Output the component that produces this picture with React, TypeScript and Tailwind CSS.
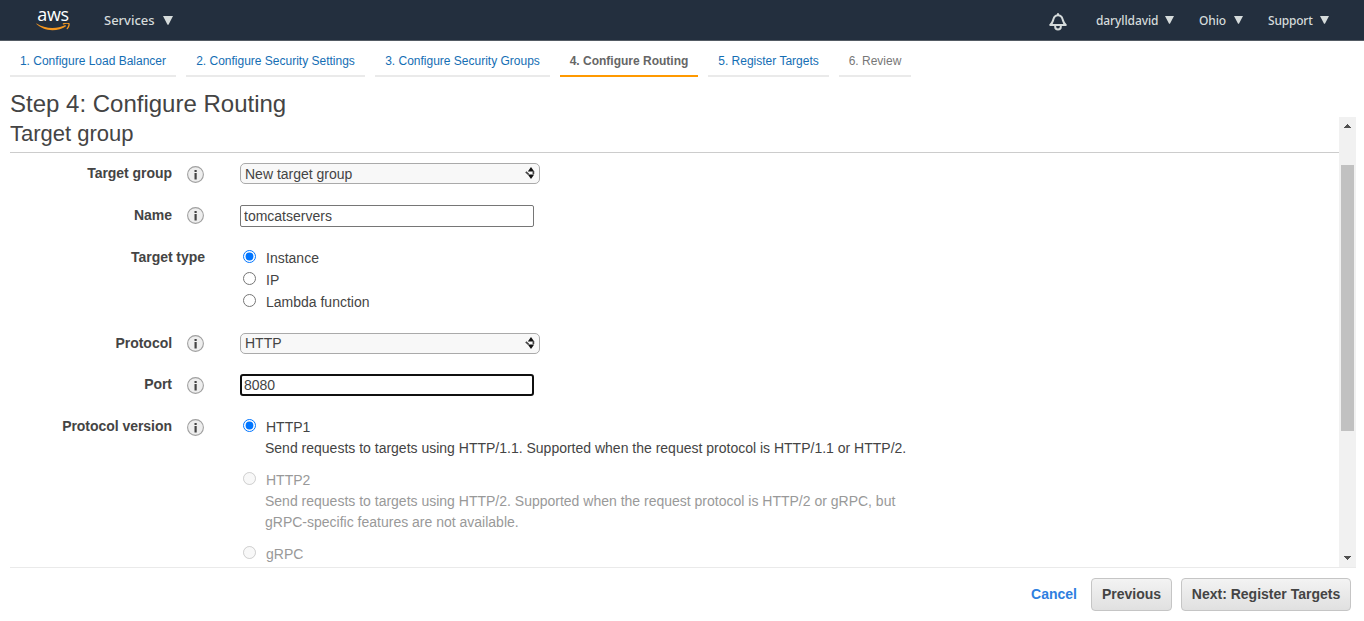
import React from "react";

function Caret({ size }: { size: "lg" | "sm" }) {
  return (
    <svg className={size === "lg" ? "h-[9px] w-[10px]" : "h-[8px] w-[9px]"} viewBox="0 0 11 9" preserveAspectRatio="none">
      <path d="M0 0h11L6.2 8.4a.8.8 0 0 1-1.4 0z" fill="#d5dbdb" />
    </svg>
  );
}

function AwsLogo() {
  return (
    <div className="flex h-[22px] w-[34px] flex-col items-center">
      <span className="h-[13px] font-['Open_Sans',sans-serif] text-[18px] leading-[9px] font-medium tracking-[-0.4px] text-white">aws</span>
      <svg className="h-[8px] w-[34px]" viewBox="0 0 34 8">
        <path d="M0.600 0.500C5 3.600 10.600 4.900 16.400 4.900c4.800 0 9-1 13-2.900l.6 1.200C26.200 5.900 21.400 7.200 16.400 7.200 10 7.200 4.400 4.900.4 1.100c-.3-.4-.1-.7.2-.6z" fill="#f7981f" />
        <path d="M27.400 0.900c2-1 5-.9 5.500-.3.500.7-.1 3.400-1.700 5" fill="none" stroke="#f7981f" strokeWidth="1.300" strokeLinecap="round" />
      </svg>
    </div>
  );
}

function Bell() {
  return (
    <svg className="h-[18px] w-[18px]" viewBox="0 0 18 18" fill="none" stroke="#d5dbdb" strokeWidth="2" strokeLinejoin="round" strokeLinecap="round">
      <path d="M9 1v1M1.200 12h15.600c-2.400-1.900-2.400-3.200-3.200-5.800C12.900 3.900 11.400 2.300 9 2.300S5.100 3.900 4.400 6.200C3.600 8.800 3.600 10.100 1.200 12z" />
      <path d="M6.200 12.600v1.200a2.800 2.800 0 0 0 5.600 0v-1.200" />
    </svg>
  );
}

function Header() {
  return (
    <header className="flex h-[41px] shrink-0 items-start border-b border-[#545b64] bg-[#232f3e] font-['Noto_Sans',sans-serif] text-[#d5dbdb]">
      <div className="pt-[10px] pl-[36px]">
        <AwsLogo />
      </div>
      <button className="ml-[34px] flex h-10 w-[69px] items-center justify-between">
        <span className="text-[13px] font-medium whitespace-nowrap">Services</span>
        <Caret size="lg" />
      </button>
      <div className="ml-auto flex h-10 items-center text-[12px] font-medium">
        <div className="mt-[3px] mr-[29px]">
          <Bell />
        </div>
        <button className="mr-[25px] flex w-[78px] items-center justify-between">
          <span className="tracking-[-0.1px]">darylldavid</span>
          <Caret size="sm" />
        </button>
        <button className="mr-[25px] flex w-[44px] items-center justify-between">
          <span className="tracking-[-0.1px]">Ohio</span>
          <Caret size="sm" />
        </button>
        <button className="mr-[35px] flex w-[61px] items-center justify-between">
          <span className="tracking-[-0.2px]">Support</span>
          <Caret size="sm" />
        </button>
      </div>
    </header>
  );
}

const steps = [
  { label: "1. Configure Load Balancer", style: "w-[166px] border-[#eaeaea] text-[#146eb4]" },
  { label: "2. Configure Security Settings", style: "w-[179px] border-[#eaeaea] text-[#146eb4]" },
  { label: "3. Configure Security Groups", style: "w-[175px] border-[#eaeaea] text-[#146eb4]" },
  { label: "4. Configure Routing", style: "w-[138px] border-[#f90] text-[#666] font-bold" },
  { label: "5. Register Targets", style: "w-[121px] border-[#eaeaea] text-[#146eb4]" },
  { label: "6. Review", style: "w-[72px] border-[#eaeaea] text-[#777]" },
];

function Info({ className }: { className: string }) {
  return (
    <svg className={"ml-[15px] h-[17px] w-[17px] shrink-0 " + className} viewBox="0 0 17 17">
      <circle cx="8.5" cy="8.500" r="7.900" fill="#eee" stroke="#a0a0a0" strokeWidth="1.100" />
      <path d="M7.500 4h2.200v2H7.500zM7.500 7h2.200v6.500H7.500z" fill="#444" />
    </svg>
  );
}

function Row({ label, height, info, children }: { label: string; height: string; info?: string; children: React.ReactNode }) {
  return (
    <div className={"flex shrink-0 items-start " + height}>
      <div className="flex w-[230px] shrink-0">
        <div className={"text-right font-bold tracking-[-0.04px] whitespace-nowrap " + (info ? "w-[162px]" : "w-[195px]")}>{label}</div>
        {info && <Info className={info} />}
      </div>
      <div>{children}</div>
    </div>
  );
}

function Select({ value, textStyle = "" }: { value: string; textStyle?: string }) {
  return (
    <div className="flex h-[21px] w-[300px] items-center justify-between rounded-[5px] border border-[#aaa] bg-[#f8f8f8] pr-[4px] pl-[4px]">
      <span className={textStyle}>{value}</span>
      <svg className="mb-px h-[12px] w-[10px]" viewBox="0 0 10 12">
        <path d="M6 0l3.200 4.500H2.800zM6 12l3.200-4.500H2.800z" fill="#111" />
        <path d="M0.800 4.800l2.800 2.600M8.400 4v3" fill="none" stroke="#444" strokeWidth="1.700" />
      </svg>
    </div>
  );
}

function Radio({ label, group, checked, disabled }: { label: string; group: string; checked?: boolean; disabled?: boolean }) {
  return (
    <label className="flex items-start">
      <input type="radio" name={group} defaultChecked={checked} disabled={disabled} className="mt-[2px] mr-[10px] ml-[3px] h-[13px] w-[13px] shrink-0" />
      <span>{label}</span>
    </label>
  );
}

export default function App() {
  return (
    <div className="flex h-[621px] w-[1364px] flex-col overflow-hidden bg-white font-['Liberation_Sans',Arial,sans-serif] text-[14px] leading-[21px] text-[#444]">
      <Header />
      <nav className="ml-[10px] flex h-[36px] shrink-0 gap-[10px] text-[12px]">
        {steps.map((s) => (
          <a key={s.label} className={"h-[36px] border-b-2 pt-[10px] text-center whitespace-nowrap " + s.style}>{s.label}</a>
        ))}
      </nav>
      <h1 className="ml-[10px] h-[40px] shrink-0 pt-[12px] text-[24px] leading-[30px]">Step 4: Configure Routing</h1>
      <main className="mr-[8px] ml-[10px] flex h-[451px] shrink-0 overflow-hidden border-b border-[#eaeaea]">
        <section className="flex w-[1329px] flex-col">
          <h2 className="h-[36px] shrink-0 border-b border-[#ccc] pt-[3px] text-[22px] leading-[28px]">Target group</h2>
          <div className="flex flex-col pt-[10px]">
            <Row label="Target group" height="h-[42px]" info="mt-[3px]">
              <Select value="New target group" textStyle="pt-[2px]" />
            </Row>
            <Row label="Name" height="h-[42px]" info="mt-[2px]">
              <input defaultValue="tomcatservers" className="block h-[22px] w-[294px] rounded-[2px] border border-[#767676] px-[3px] outline-none" />
            </Row>
            <Row label="Target type" height="h-[86px]">
              <div className="flex flex-col gap-px pt-px">
                <Radio group="type" label="Instance" checked />
                <Radio group="type" label="IP" />
                <Radio group="type" label="Lambda function" />
              </div>
            </Row>
            <Row label="Protocol" height="h-[41px]" info="mt-[2px]">
              <Select value="HTTP" />
            </Row>
            <Row label="Port" height="h-[42px]" info="mt-[3px]">
              <input defaultValue="8080" className="block h-[22px] w-[294px] rounded-[3px] border-2 border-[#101010] px-[2px] outline-none" />
            </Row>
            <Row label="Protocol version" height="h-[151px]" info="mt-[3px]">
              <div className="flex flex-col gap-[11px] pt-px">
                <div>
                  <Radio group="version" label="HTTP1" checked />
                  <p className="pl-[25px]">Send requests to targets using HTTP/1.1. Supported when the request protocol is HTTP/1.1 or HTTP/2.</p>
                </div>
                <div className="text-[#999]">
                  <Radio group="version" label="HTTP2" disabled />
                  <p className="w-[670px] pl-[25px]">
                    Send requests to targets using HTTP/2. Supported when the request protocol is HTTP/2 or gRPC, but gRPC-specific features are not available.
                  </p>
                </div>
                <div className="text-[#999]">
                  <Radio group="version" label="gRPC" disabled />
                </div>
              </div>
            </Row>
          </div>
        </section>
        <div className="flex w-[17px] flex-col items-center bg-[#f1f1f1]">
          <svg className="h-[17px] w-[17px] shrink-0" viewBox="0 0 17 17" shapeRendering="crispEdges">
            <path d="M5 11L8.500 7 12 11z" fill="#505050" />
          </svg>
          <div className="mt-[31px] h-[266px] w-[13px] shrink-0 bg-[#c1c1c1]" />
          <svg className="mt-auto h-[17px] w-[17px] shrink-0" viewBox="0 0 17 17" shapeRendering="crispEdges">
            <path d="M5 6L8.500 10 12 6z" fill="#505050" />
          </svg>
        </div>
      </main>
      <footer className="flex h-[53px] shrink-0 items-start justify-end pt-[10px] pr-[13px] font-bold">
        <a className="mt-[6px] mr-[14px] text-[#2e80e0]">Cancel</a>
        <button className="mr-[9px] h-[33px] w-[81px] rounded-[4px] border border-[#c5c5c5] bg-linear-to-b from-[#f3f3f3] to-[#e0e0e0]">Previous</button>
        <button className="h-[33px] w-[170px] rounded-[4px] border border-[#c5c5c5] bg-linear-to-b from-[#f3f3f3] to-[#e0e0e0] whitespace-nowrap">Next: Register Targets</button>
      </footer>
    </div>
  );
}
